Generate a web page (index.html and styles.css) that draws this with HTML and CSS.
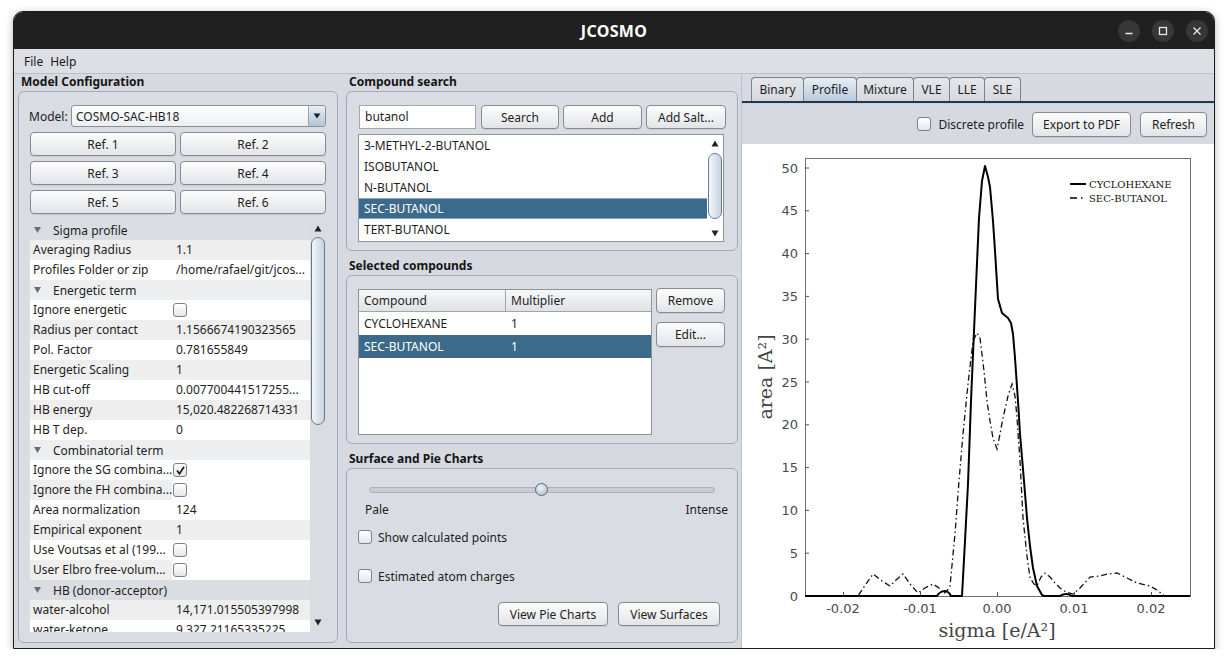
FILE: index.html
```html
<!DOCTYPE html>
<html>
<head>
<meta charset="utf-8">
<link rel="stylesheet" href="styles.css">
</head>
<body>
<div class="page">
<div class="window">
  <div class="titlebar">
    <div></div>
    <div class="title">JCOSMO</div>
    <div class="winbtns">
      <span class="wbtn"><svg width="10" height="10" viewBox="0 0 10 10"><path d="M1.5 7.5H8.5" stroke="#e8e8e8" stroke-width="1.3"/></svg></span>
      <span class="wbtn"><svg width="10" height="10" viewBox="0 0 10 10"><rect x="1.5" y="1.5" width="7" height="7" fill="none" stroke="#e8e8e8" stroke-width="1.3"/></svg></span>
      <span class="wbtn"><svg width="10" height="10" viewBox="0 0 10 10"><path d="M1.5 1.5L8.5 8.5M8.5 1.5L1.5 8.5" stroke="#e8e8e8" stroke-width="1.3"/></svg></span>
    </div>
  </div>
  <div class="menubar"><span>File</span><span>Help</span></div>
  <div class="content">
    <!-- LEFT -->
    <div class="col col-left">
      <div class="gtitle">Model Configuration</div>
      <div class="group g-model">
        <div class="model-row">
          <span class="model-label">Model:</span>
          <div class="combo">
            <span class="combo-text">COSMO-SAC-HB18</span>
            <span class="combo-arrow"><svg width="8" height="6" viewBox="0 0 8 6"><path d="M0.5 0.5H7.5L4 5.5Z" fill="#222"/></svg></span>
          </div>
        </div>
        <div class="refs">
          <div class="btn">Ref. 1</div><div class="btn">Ref. 2</div>
          <div class="btn">Ref. 3</div><div class="btn">Ref. 4</div>
          <div class="btn">Ref. 5</div><div class="btn">Ref. 6</div>
        </div>
        <div class="proptable">
          <div class="props">
            <div class="prow hdr hdr-dark"><svg class="tri" width="7" height="6" viewBox="0 0 7 6"><path d="M0 0H7L3.5 6Z" fill="#6b6f75"/></svg><span>Sigma profile</span></div>
            <div class="prow grey"><span class="k">Averaging Radius</span><span class="v">1.1</span></div>
            <div class="prow"><span class="k">Profiles Folder or zip</span><span class="v">/home/rafael/git/jcos...</span></div>
            <div class="prow hdr hdr-light"><svg class="tri" width="7" height="6" viewBox="0 0 7 6"><path d="M0 0H7L3.5 6Z" fill="#6b6f75"/></svg><span>Energetic term</span></div>
            <div class="prow"><span class="k">Ignore energetic</span><span class="v vcb"><span class="cb"></span></span></div>
            <div class="prow grey"><span class="k">Radius per contact</span><span class="v">1.1566674190323565</span></div>
            <div class="prow"><span class="k">Pol. Factor</span><span class="v">0.781655849</span></div>
            <div class="prow grey"><span class="k">Energetic Scaling</span><span class="v">1</span></div>
            <div class="prow"><span class="k">HB cut-off</span><span class="v">0.007700441517255...</span></div>
            <div class="prow grey"><span class="k">HB energy</span><span class="v">15,020.482268714331</span></div>
            <div class="prow"><span class="k">HB T dep.</span><span class="v">0</span></div>
            <div class="prow hdr hdr-light"><svg class="tri" width="7" height="6" viewBox="0 0 7 6"><path d="M0 0H7L3.5 6Z" fill="#6b6f75"/></svg><span>Combinatorial term</span></div>
            <div class="prow"><span class="k">Ignore the SG combina...</span><span class="v vcb"><span class="cb"><svg width="11" height="11" viewBox="0 0 11 11"><path d="M2 5.5L4.5 8.8L9 1.8" fill="none" stroke="#1d1d1d" stroke-width="1.8"/></svg></span></span></div>
            <div class="prow greyk"><span class="k">Ignore the FH combina...</span><span class="v vcb"><span class="cb"></span></span></div>
            <div class="prow"><span class="k">Area normalization</span><span class="v">124</span></div>
            <div class="prow grey"><span class="k">Empirical exponent</span><span class="v">1</span></div>
            <div class="prow"><span class="k">Use Voutsas et al (199...</span><span class="v vcb"><span class="cb"></span></span></div>
            <div class="prow greyk"><span class="k">User Elbro free-volum...</span><span class="v vcb"><span class="cb"></span></span></div>
            <div class="prow hdr hdr-dark"><svg class="tri" width="7" height="6" viewBox="0 0 7 6"><path d="M0 0H7L3.5 6Z" fill="#6b6f75"/></svg><span>HB (donor-acceptor)</span></div>
            <div class="prow grey"><span class="k">water-alcohol</span><span class="v">14,171.015505397998</span></div>
            <div class="prow"><span class="k">water-ketone</span><span class="v">9,327.21165335225</span></div>
          </div>
          <div class="vscroll vscroll-props">
            <div class="sarrow"><svg width="8" height="7" viewBox="0 0 8 7"><path d="M4 0.5L7.5 6.5H0.5Z" fill="#222"/></svg></div>
            <div class="strack"><div class="sthumb thumb-props"></div></div>
            <div class="sarrow"><svg width="8" height="7" viewBox="0 0 8 7"><path d="M0.5 0.5H7.5L4 6.5Z" fill="#222"/></svg></div>
          </div>
        </div>
      </div>
    </div>

    <!-- MIDDLE -->
    <div class="col col-mid">
      <div class="gtitle">Compound search</div>
      <div class="group g-search">
        <div class="search-row">
          <div class="tfield">butanol</div>
          <div class="btn b-search">Search</div>
          <div class="btn b-add">Add</div>
          <div class="btn b-salt">Add Salt...</div>
        </div>
        <div class="list">
          <div class="litems">
            <div class="li">3-METHYL-2-BUTANOL</div>
            <div class="li">ISOBUTANOL</div>
            <div class="li">N-BUTANOL</div>
            <div class="li sel">SEC-BUTANOL</div>
            <div class="li">TERT-BUTANOL</div>
          </div>
          <div class="vscroll vscroll-list">
            <div class="sarrow"><svg width="8" height="7" viewBox="0 0 8 7"><path d="M4 0.5L7.5 6.5H0.5Z" fill="#222"/></svg></div>
            <div class="strack"><div class="sthumb thumb-list"></div></div>
            <div class="sarrow"><svg width="8" height="7" viewBox="0 0 8 7"><path d="M0.5 0.5H7.5L4 6.5Z" fill="#222"/></svg></div>
          </div>
        </div>
      </div>

      <div class="gtitle gt-next">Selected compounds</div>
      <div class="group g-selected">
        <div class="seltable">
          <div class="thead"><span class="th th1">Compound</span><span class="th">Multiplier</span></div>
          <div class="trow"><span class="td td1">CYCLOHEXANE</span><span class="td">1</span></div>
          <div class="trow sel"><span class="td td1">SEC-BUTANOL</span><span class="td">1</span></div>
        </div>
        <div class="selbtns">
          <div class="btn b-side">Remove</div>
          <div class="btn b-side">Edit...</div>
        </div>
      </div>

      <div class="gtitle gt-next">Surface and Pie Charts</div>
      <div class="group g-surface">
        <div class="slider"><div class="track"></div><div class="knob"></div></div>
        <div class="slabels"><span>Pale</span><span>Intense</span></div>
        <div class="chkrow chk1"><span class="cb"></span><span>Show calculated points</span></div>
        <div class="chkrow chk2"><span class="cb"></span><span>Estimated atom charges</span></div>
        <div class="viewbtns">
          <div class="btn b-pie">View Pie Charts</div>
          <div class="btn b-surf">View Surfaces</div>
        </div>
      </div>
    </div>

    <!-- RIGHT -->
    <div class="col col-right">
      <div class="tabs">
        <div class="tab t-binary">Binary</div>
        <div class="tab t-profile active">Profile</div>
        <div class="tab t-mixture">Mixture</div>
        <div class="tab t-vle">VLE</div>
        <div class="tab t-lle">LLE</div>
        <div class="tab t-sle">SLE</div>
      </div>
      <div class="tabline"></div>
      <div class="toolbar">
        <div class="chkrow"><span class="cb"></span><span>Discrete profile</span></div>
        <div class="btn b-pdf">Export to PDF</div>
        <div class="btn b-refresh">Refresh</div>
      </div>
      <div class="chart">
        <svg width="471" height="504" viewBox="742 143 471 504">
          <rect x="805.5" y="157.5" width="385" height="438" fill="none" stroke="#707070" stroke-width="1"/>
          <g stroke="#555" stroke-width="1">
            <path d="M805 552.2h4M805 509.4h4M805 466.6h4M805 423.8h4M805 381h4M805 338.2h4M805 295.4h4M805 252.6h4M805 209.8h4M805 167h4"/>
            <path d="M843.5 595v-4M920.5 595v-4M997.5 595v-4M1074.5 595v-4M1151.5 595v-4"/>
          </g>
          <g class="ticklbl" text-anchor="end">
            <text x="798" y="599.5">0</text>
            <text x="798" y="556.7">5</text>
            <text x="798" y="513.9">10</text>
            <text x="798" y="471.1">15</text>
            <text x="798" y="428.3">20</text>
            <text x="798" y="385.5">25</text>
            <text x="798" y="342.7">30</text>
            <text x="798" y="299.9">35</text>
            <text x="798" y="257.1">40</text>
            <text x="798" y="214.3">45</text>
            <text x="798" y="171.5">50</text>
          </g>
          <g class="ticklbl" text-anchor="middle">
            <text x="843" y="612">-0.02</text>
            <text x="920" y="612">-0.01</text>
            <text x="997" y="612">0.00</text>
            <text x="1074" y="612">0.01</text>
            <text x="1151" y="612">0.02</text>
          </g>
          <text class="axlbl" x="997" y="636" text-anchor="middle">sigma [e/A²]</text>
          <text class="axlbl" transform="translate(772 376) rotate(-90)" text-anchor="middle">area [A²]</text>
          <!-- SEC-BUTANOL -->
          <path fill="none" stroke="#111" stroke-width="1.3" stroke-dasharray="6 3 1.5 3" d="M805 595 L858 595 L866 583 L873 573 L882 580 L890 585 L896 579 L903 573 L910 583 L918 592 L925 587 L933 583 L939 587 L943 593 L947 590 L950 585 L955 533 L959 480 L963 433 L968 383 L973 340 L977 332 L980 337 L984 370 L987 400 L990 420 L993 437 L997 448 L1000 433 L1003 417 L1008 395 L1012 383 L1015 395 L1017 417 L1020 460 L1023 517 L1027 555 L1030 577 L1034 583 L1037 585 L1041 576 L1045 572 L1050 576 L1055 582 L1060 587 L1066 591 L1073 593 L1080 587 L1090 576 L1100 575 L1108 573 L1117 572 L1127 577 L1137 582 L1150 585 L1157 589 L1162 593 L1165 595 L1190 595"/>
          <!-- CYCLOHEXANE -->
          <path fill="none" stroke="#000" stroke-width="2" stroke-linejoin="round" d="M805 595 L937 595 C940 590 947 587 951 595 L962 595 L965 540 L968 483 L971 400 L974 330 L977 262 L979 217 L982 180 L985 165 L988 176 L990 186 L993 220 L995 250 L998 298 L1002 312 L1008 317 L1011 322 L1013 333 L1015 357 L1018 400 L1020 433 L1024 480 L1027 517 L1030 545 L1033 567 L1037 585 L1042 594 L1044 595 L1060 595 Q1066 591 1072 595 L1190 595"/>
          <!-- legend -->
          <path d="M1070 183H1086" stroke="#000" stroke-width="2"/>
          <path d="M1070 197H1077M1081 197H1082.5" stroke="#000" stroke-width="1.3"/>
          <text class="legend" x="1089" y="186.5">CYCLOHEXANE</text>
          <text class="legend" x="1089" y="200.5">SEC-BUTANOL</text>
        </svg>
      </div>
    </div>
  </div>
</div>
</div>
</body>
</html>
```

FILE: styles.css
```css
html, body { margin: 0; padding: 0; background: #ffffff; }
body { font-family: "Noto Sans", "DejaVu Sans", sans-serif; font-size: 12px; color: #1e1e1e; }

.page { padding: 11px 0 0 13px; }

.window {
  width: 1202px; height: 638px; box-sizing: border-box;
  border: 1px solid #1c1c1c; border-radius: 10px 10px 0 0;
  background: #d6d9df; overflow: hidden;
  display: flex; flex-direction: column;
  box-shadow: 0 2px 9px rgba(0,0,0,0.28);
}

.titlebar {
  height: 37px; flex: none; background: #202020;
  display: grid; grid-template-columns: 1fr auto 1fr; align-items: center;
}
.title { color: #ffffff; font-weight: 700; font-size: 16px; letter-spacing: 0.3px; }
.winbtns { display: flex; justify-content: flex-end; gap: 12px; padding-right: 6px; }
.wbtn { width: 22px; height: 22px; border-radius: 50%; background: #373737; display: flex; align-items: center; justify-content: center; }

.menubar {
  height: 24px; flex: none; background: #dcdfe4; border-bottom: 1px solid #bcc0c7;
  display: flex; align-items: center; gap: 7px; padding-left: 10px; color: #1a1a1a;
}

.content { flex: 1; display: flex; min-height: 0; }
.col { display: flex; flex-direction: column; box-sizing: border-box; }
.col-left { width: 328px; padding: 0 4px 5px 4px; }
.col-mid { width: 399px; padding: 0 3px 5px 4px; }
.col-right { width: 473px; border-left: 1px solid #b9c2ce; }

.gtitle { height: 17px; line-height: 16px; font-weight: 700; padding-left: 3px; color: #151515; flex: none; }
.gt-next { margin-top: 7px; }

.group {
  box-sizing: border-box; border: 1px solid #a6abb3; border-radius: 6px;
  background: #d9dce2;
}

/* buttons */
.btn {
  box-sizing: border-box; height: 24px; border: 1px solid #868b93; border-radius: 4px;
  background: linear-gradient(#fdfdfd, #e2e4e8);
  display: flex; align-items: center; justify-content: center; color: #1e1e1e;
  box-shadow: 0 1px 0 rgba(0,0,0,0.08);
}

/* checkbox */
.cb {
  width: 14px; height: 14px; box-sizing: border-box; border: 1px solid #7b818a; border-radius: 3px;
  background: linear-gradient(#ffffff, #e4e6ea); display: inline-flex; align-items: center; justify-content: center; flex: none;
}

/* left group */
.g-model { flex: 1; padding: 13px 11px 0 10px; display: flex; flex-direction: column; }
.model-row { display: flex; align-items: center; height: 22px; }
.model-label { width: 42px; }
.combo {
  flex: 1; height: 22px; box-sizing: border-box; border: 1px solid #8c9199; border-radius: 3px;
  background: linear-gradient(#ffffff, #eceef1); display: flex; align-items: center;
}
.combo-text { flex: 1; padding-left: 4px; }
.combo-arrow {
  width: 16px; height: 20px; border-left: 1px solid #9aa3ae; border-radius: 0 2px 2px 0;
  background: linear-gradient(#e6edf5, #b3c4d7); display: flex; align-items: center; justify-content: center;
}
.refs { display: grid; grid-template-columns: 1fr 1fr; gap: 5px 4px; margin: 5px 0 0 1px; }
.proptable { display: flex; margin: 6px 0 0 1px; height: 412px; }
.props { width: 280px; background: #ffffff; overflow: hidden; }
.prow { height: 20px; display: flex; align-items: center; background: #ffffff; white-space: nowrap; }
.prow .k { width: 139px; padding-left: 3px; height: 20px; line-height: 20px; flex: none; }
.prow .v { flex: 1; padding-left: 4px; height: 20px; line-height: 20px; }
.prow.grey { background: #eeeeee; }
.prow.greyk .k { background: #eeeeee; }
.prow .vcb { padding-left: 0; display: flex; align-items: center; }
.prow .vcb .cb { margin-left: 1px; }
.hdr .tri { margin: 0 12px 0 4px; }
.hdr-dark { background: #dadde2; }
.hdr-light { background: #eceef0; }

/* scrollbars */
.vscroll { width: 16px; display: flex; flex-direction: column; background: #d9dce1; }
.vscroll-props { height: 412px; padding-bottom: 2px; box-sizing: border-box; }
.sarrow { height: 16px; display: flex; align-items: center; justify-content: center; flex: none; }
.strack { flex: 1; }
.sthumb {
  margin: 1px 1px 0 1px; box-sizing: border-box; border: 1px solid #6b7a8b; border-radius: 7px;
  background: linear-gradient(90deg, #f3f6fa, #c6d4e3);
}
.thumb-props { height: 188px; }
.thumb-list { height: 66px; margin-top: 2px; }

/* middle: search */
.g-search { height: 160px; flex: none; padding: 13px 11px 0 11px; }
.search-row { display: flex; height: 24px; }
.tfield {
  width: 117px; margin-left: 1px; box-sizing: border-box; height: 24px; border: 1px solid #a3a8af;
  background: #ffffff; padding-left: 5px; line-height: 22px;
}
.b-search { width: 78px; margin-left: 5px; }
.b-add { width: 79px; margin-left: 4px; }
.b-salt { width: 80px; margin-left: 4px; }
.list {
  margin-top: 5px; width: 366px; height: 108px; box-sizing: border-box; border: 1px solid #8e939a;
  background: #ffffff; display: flex;
}
.litems { flex: 1; }
.li { height: 21px; line-height: 21px; padding-left: 5px; box-sizing: border-box; }
.li.sel { background: #3b6a8b; color: #ffffff; border-top: 1px solid #7fa7c9; border-bottom: 1px solid #7fa7c9; line-height: 19px; }
.vscroll-list { width: 16px; background: #ffffff; }

/* middle: selected */
.g-selected { height: 169px; flex: none; padding: 13px 0 0 11px; display: flex; }
.seltable { width: 294px; height: 146px; box-sizing: border-box; border: 1px solid #8e939a; background: #ffffff; }
.thead { height: 22px; display: flex; background: linear-gradient(#f6f7f8, #dfe2e6); border-bottom: 1px solid #a0a5ac; box-sizing: border-box; }
.th { line-height: 21px; padding-left: 5px; }
.th1 { width: 141px; border-right: 1px solid #a0a5ac; }
.trow { height: 23px; display: flex; align-items: center; }
.td { padding-left: 5px; }
.td1 { width: 142px; }
.trow.sel { background: #3b6a8b; color: #ffffff; }
.selbtns { margin-left: 4px; margin-top: -1px; display: flex; flex-direction: column; gap: 9px; }
.b-side { width: 69px; height: 25px; }

/* middle: surface */
.g-surface { flex: 1; padding: 0; display: flex; flex-direction: column; }
.slider { position: relative; height: 14px; margin: 14px 22px 0 22px; }
.track {
  position: absolute; left: 0; right: 0; top: 4px; height: 6px; box-sizing: border-box;
  border: 1px solid #aeb3ba; border-radius: 3px; background: #c9cdd3;
}
.knob {
  position: absolute; left: 166px; top: 0; width: 13px; height: 13px; box-sizing: border-box; border-radius: 50%;
  border: 1px solid #59646f; background: radial-gradient(circle at 40% 35%, #eef2f7, #a8b8c9);
}
.slabels { display: flex; justify-content: space-between; padding: 4px 9px 0 18px; height: 18px; line-height: 18px; }
.chkrow { display: flex; align-items: center; gap: 6px; height: 18px; }
.chk1 { margin: 9px 0 0 11px; }
.chk2 { margin: 21px 0 0 11px; }
.viewbtns { display: flex; justify-content: flex-end; gap: 10px; padding-right: 17px; margin-top: 17px; }
.b-pie { width: 110px; }
.b-surf { width: 102px; }

/* right */
.tabs { height: 24px; margin-top: 3px; padding-left: 9px; display: flex; align-items: flex-end; flex: none; }
.tab {
  height: 24px; box-sizing: border-box; border: 1px solid #7c818a; border-bottom: none; border-radius: 4px 4px 0 0;
  background: linear-gradient(#e4e7eb, #d5d8de); display: flex; align-items: center; justify-content: center;
  margin-right: -1px;
}
.tab.active { background: linear-gradient(#e8eef5, #b8cadc); }
.t-binary { width: 53px; }
.t-profile { width: 54px; }
.t-mixture { width: 58px; }
.t-vle { width: 37px; }
.t-lle { width: 36px; }
.t-sle { width: 37px; }
.tabline { height: 2px; background: #23364a; border-bottom: 1px solid #c6d3e0; flex: none; }
.toolbar { height: 40px; flex: none; display: flex; align-items: center; justify-content: flex-end; padding-right: 7px; }
.toolbar .chkrow { gap: 7px; margin-right: 8px; }
.b-pdf { width: 99px; height: 25px; }
.b-refresh { width: 67px; height: 25px; margin-left: 9px; }
.chart { flex: 1; background: #ffffff; min-height: 0; overflow: hidden; }
.chart svg { display: block; }
.ticklbl text { font-family: "DejaVu Sans", sans-serif; font-size: 13px; fill: #4a4a4a; }
.axlbl { font-family: "DejaVu Serif", serif; font-size: 19px; fill: #444444; }
.legend { font-family: "DejaVu Serif", serif; font-size: 10px; fill: #111111; }
```
